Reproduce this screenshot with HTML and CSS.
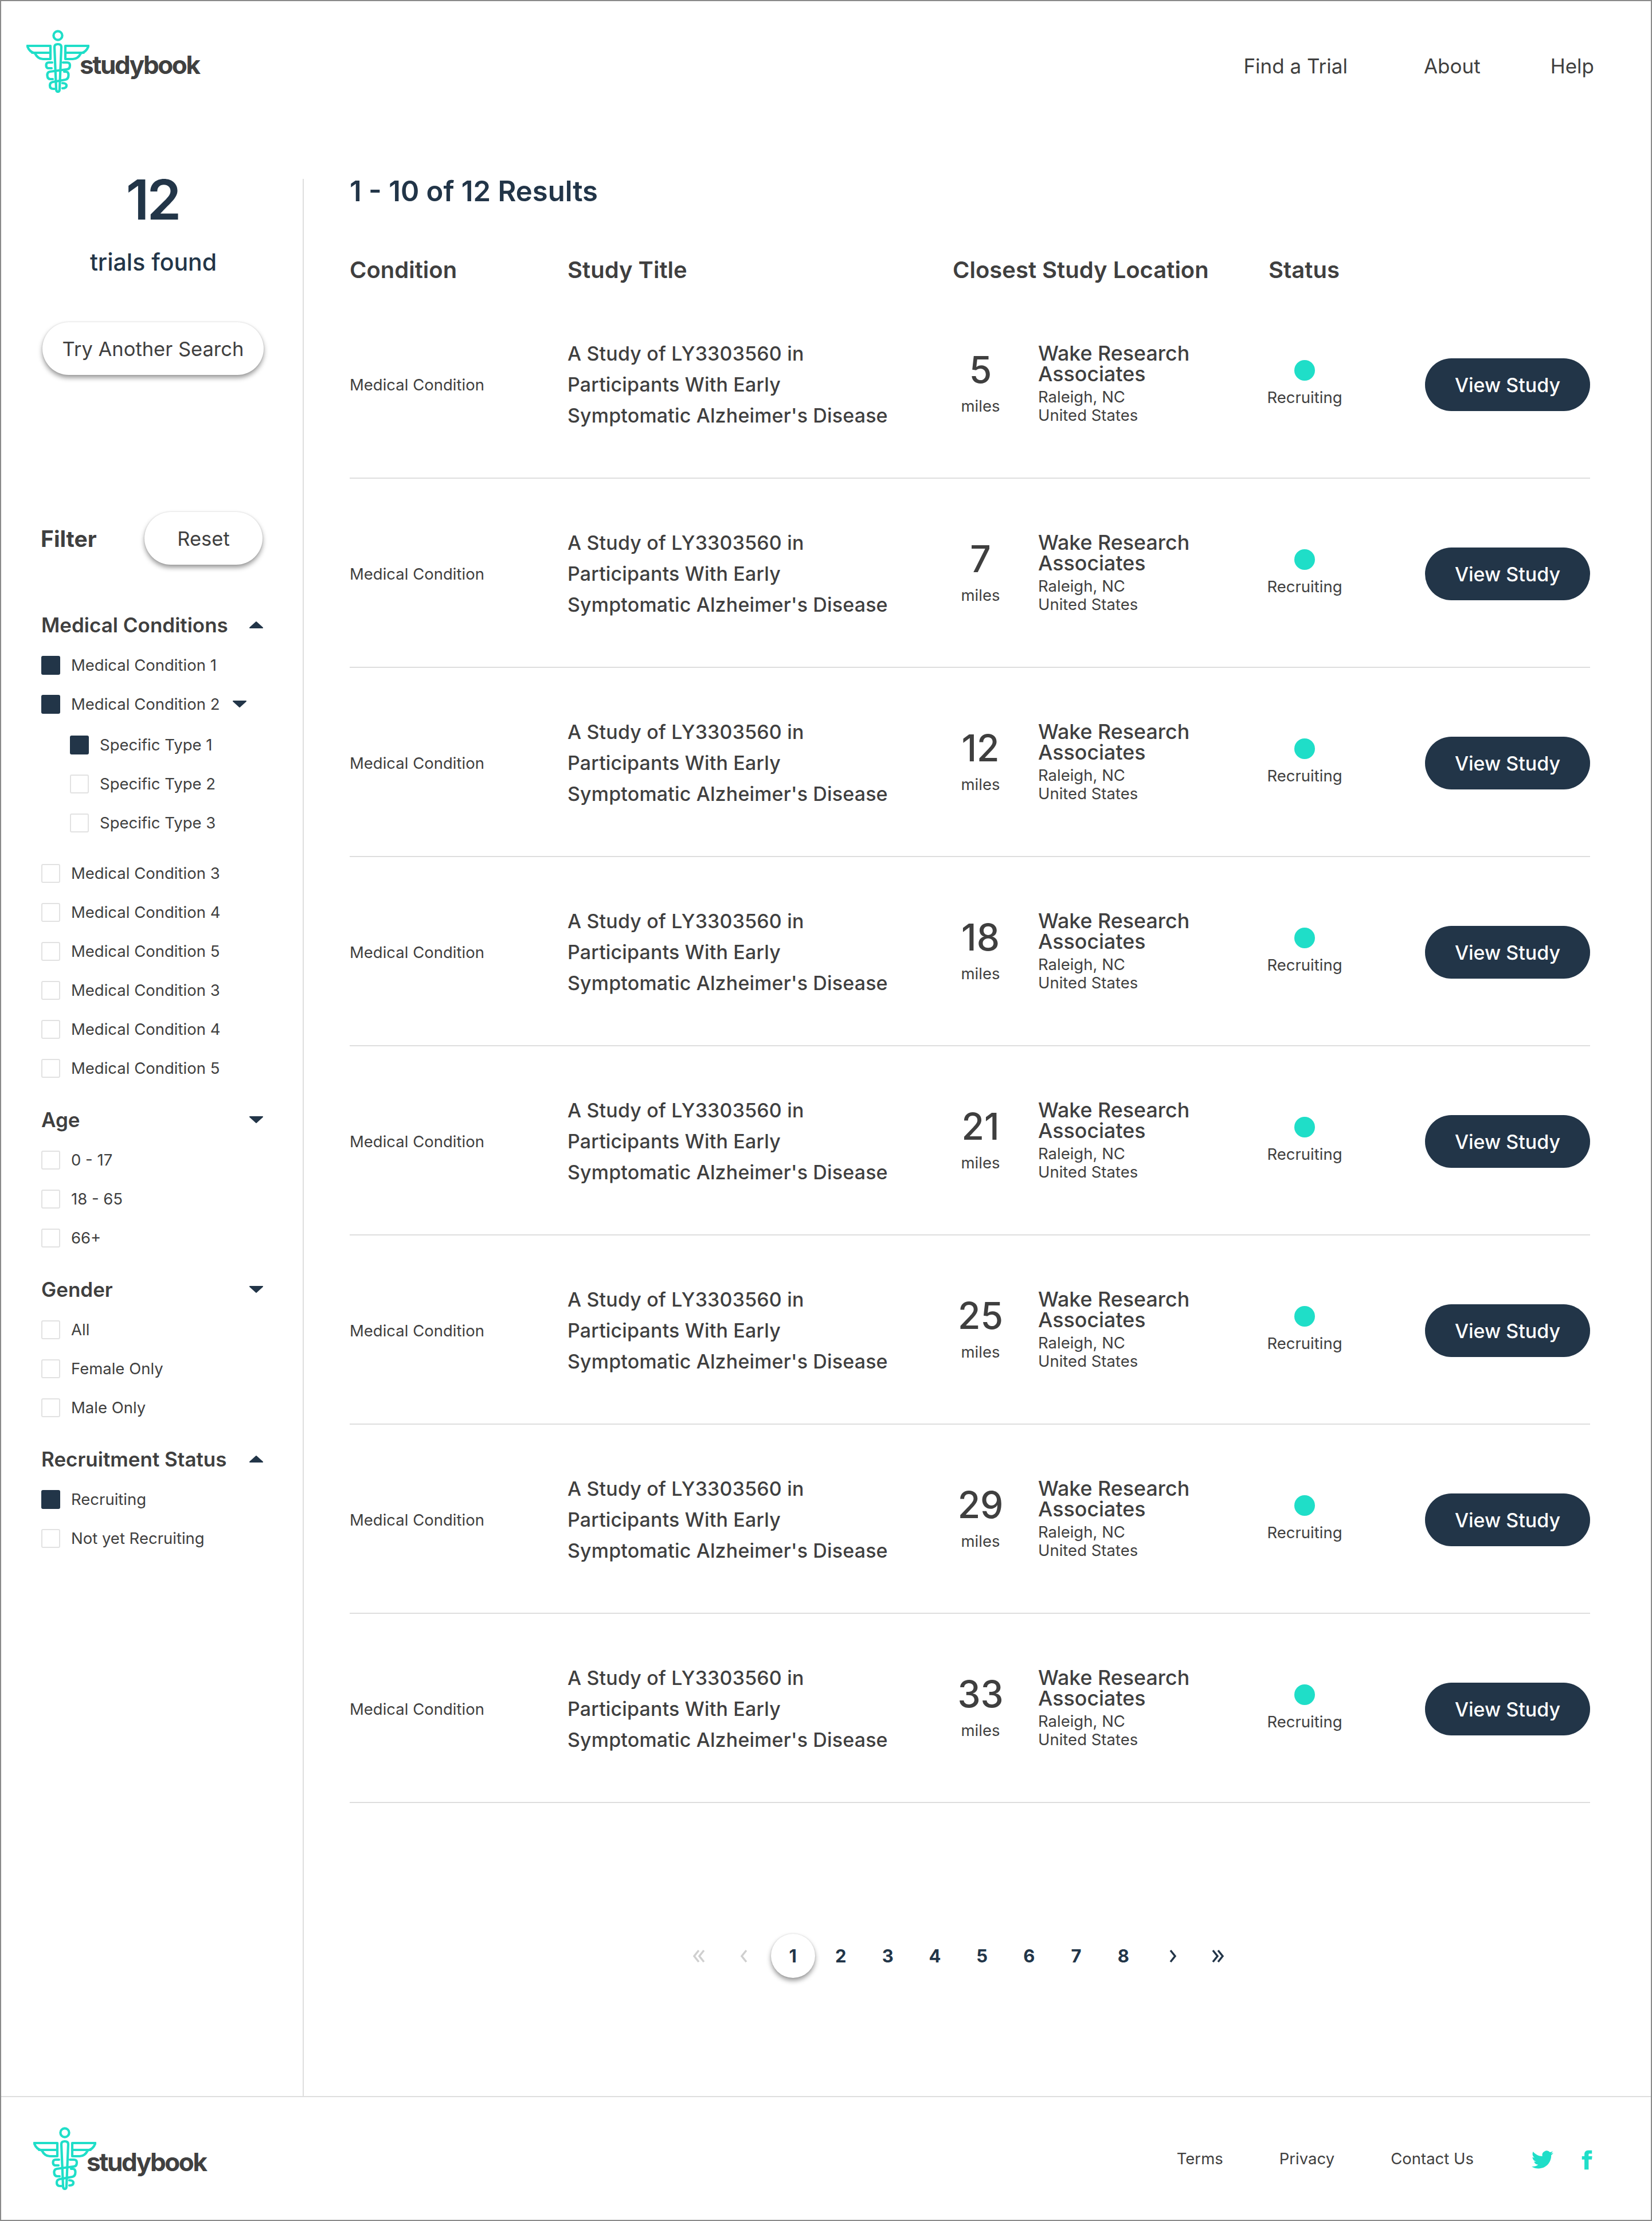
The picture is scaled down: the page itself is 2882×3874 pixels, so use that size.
FILE: index.html
```html
<!DOCTYPE html>
<html lang="en">
<head>
    <meta charset="UTF-8">
    <title>Studybook - Find a Trial</title>
    <link rel="stylesheet" href="styles.css">
</head>
<body>
    <!-- shared icons -->
    <svg class="icon-defs" width="0" height="0">
        <symbol id="caduceus" viewBox="0 0 110 110">
            <g fill="none" stroke="#1fdec8" stroke-width="4.2" stroke-linecap="round" stroke-linejoin="round">
                <circle cx="55" cy="10" r="7.6"/>
                <path d="M49 30Q49 25 55 25Q61 25 61 30L58 103Q58 108 55 108Q52 108 52 103Z"/>
                <path d="M1.500 28H42V51H29Q20 51 15 41Q5 39 1.500 28ZM10 40H42"/>
                <path d="M108.500 28H68V51H81Q90 51 95 41Q105 39 108.500 28ZM100 40H68"/>
                <path d="M45 57H39Q34.500 57 34.500 62Q34.500 67 39 67H44"/>
                <path d="M64 57H71Q76 57 76 62Q76 69 70 69L41 73Q36 74 36.500 80Q37 86 42 86H46"/>
                <path d="M66 73H69Q73.500 73 73.500 79Q73.500 86 68 87L46 91Q41 92 41 97Q41 103 47 103H49"/>
                <path d="M63 93Q70 93 70 97.500Q70 102 63 102"/>
            </g>
        </symbol>
        <symbol id="arrow-up" viewBox="0 0 26 14">
            <path d="M13 2L24 12H2Z" fill="#223548" stroke="#223548" stroke-width="2" stroke-linejoin="round"/>
        </symbol>
        <symbol id="arrow-down" viewBox="0 0 26 14">
            <path d="M13 12L24 2H2Z" fill="#223548" stroke="#223548" stroke-width="2" stroke-linejoin="round"/>
        </symbol>
    </svg>

    <div class="page">
        <header class="site-header">
            <a class="logo">
                <svg class="logo-icon"><use href="#caduceus"/></svg>
                <span class="logo-text">studybook</span>
            </a>
            <nav class="main-nav">
                <a class="nav-find">Find a Trial</a>
                <a class="nav-about">About</a>
                <a>Help</a>
            </nav>
        </header>

        <div class="content">
            <aside class="sidebar">
                <div class="found-count">12</div>
                <div class="found-label">trials found</div>
                <button class="pill-btn search-btn">Try Another Search</button>

                <div class="filter-title">
                    <span>Filter</span>
                    <button class="pill-btn reset-btn">Reset</button>
                </div>

                <section class="filter-group first-group">
                    <h3 class="filter-heading">Medical Conditions <svg class="arrow"><use href="#arrow-up"/></svg></h3>
                    <div class="check-item"><span class="box checked"></span>Medical Condition 1</div>
                    <div class="check-item"><span class="box checked"></span>Medical Condition 2 <svg class="arrow arrow-inline"><use href="#arrow-down"/></svg></div>
                    <div class="sub-list">
                        <div class="check-item"><span class="box checked"></span>Specific Type 1</div>
                        <div class="check-item"><span class="box"></span>Specific Type 2</div>
                        <div class="check-item"><span class="box"></span>Specific Type 3</div>
                    </div>
                    <div class="check-item"><span class="box"></span>Medical Condition 3</div>
                    <div class="check-item"><span class="box"></span>Medical Condition 4</div>
                    <div class="check-item"><span class="box"></span>Medical Condition 5</div>
                    <div class="check-item"><span class="box"></span>Medical Condition 3</div>
                    <div class="check-item"><span class="box"></span>Medical Condition 4</div>
                    <div class="check-item"><span class="box"></span>Medical Condition 5</div>
                </section>

                <section class="filter-group">
                    <h3 class="filter-heading">Age <svg class="arrow"><use href="#arrow-down"/></svg></h3>
                    <div class="check-item"><span class="box"></span>0 - 17</div>
                    <div class="check-item"><span class="box"></span>18 - 65</div>
                    <div class="check-item"><span class="box"></span>66+</div>
                </section>

                <section class="filter-group">
                    <h3 class="filter-heading">Gender <svg class="arrow"><use href="#arrow-down"/></svg></h3>
                    <div class="check-item"><span class="box"></span>All</div>
                    <div class="check-item"><span class="box"></span>Female Only</div>
                    <div class="check-item"><span class="box"></span>Male Only</div>
                </section>

                <section class="filter-group">
                    <h3 class="filter-heading">Recruitment Status <svg class="arrow"><use href="#arrow-up"/></svg></h3>
                    <div class="check-item"><span class="box checked"></span>Recruiting</div>
                    <div class="check-item"><span class="box"></span>Not yet Recruiting</div>
                </section>
            </aside>

            <main class="results">
                <h1 class="results-title">1 - 10 of 12 Results</h1>

                <div class="table-head">
                    <div>Condition</div>
                    <div>Study Title</div>
                    <div class="head-location">Closest Study Location</div>
                    <div class="head-status">Status</div>
                </div>

                <article class="study-row">
                    <div class="condition">Medical Condition</div>
                    <div class="study-title">A Study of LY3303560 in<br>Participants With Early<br>Symptomatic Alzheimer's Disease</div>
                    <div class="distance"><strong>5</strong><span>miles</span></div>
                    <div class="location"><strong>Wake Research<br>Associates</strong><span>Raleigh, NC<br>United States</span></div>
                    <div class="status"><i class="dot"></i><span>Recruiting</span></div>
                    <button class="view-btn">View Study</button>
                </article>
                <article class="study-row">
                    <div class="condition">Medical Condition</div>
                    <div class="study-title">A Study of LY3303560 in<br>Participants With Early<br>Symptomatic Alzheimer's Disease</div>
                    <div class="distance"><strong>7</strong><span>miles</span></div>
                    <div class="location"><strong>Wake Research<br>Associates</strong><span>Raleigh, NC<br>United States</span></div>
                    <div class="status"><i class="dot"></i><span>Recruiting</span></div>
                    <button class="view-btn">View Study</button>
                </article>
                <article class="study-row">
                    <div class="condition">Medical Condition</div>
                    <div class="study-title">A Study of LY3303560 in<br>Participants With Early<br>Symptomatic Alzheimer's Disease</div>
                    <div class="distance"><strong>12</strong><span>miles</span></div>
                    <div class="location"><strong>Wake Research<br>Associates</strong><span>Raleigh, NC<br>United States</span></div>
                    <div class="status"><i class="dot"></i><span>Recruiting</span></div>
                    <button class="view-btn">View Study</button>
                </article>
                <article class="study-row">
                    <div class="condition">Medical Condition</div>
                    <div class="study-title">A Study of LY3303560 in<br>Participants With Early<br>Symptomatic Alzheimer's Disease</div>
                    <div class="distance"><strong>18</strong><span>miles</span></div>
                    <div class="location"><strong>Wake Research<br>Associates</strong><span>Raleigh, NC<br>United States</span></div>
                    <div class="status"><i class="dot"></i><span>Recruiting</span></div>
                    <button class="view-btn">View Study</button>
                </article>
                <article class="study-row">
                    <div class="condition">Medical Condition</div>
                    <div class="study-title">A Study of LY3303560 in<br>Participants With Early<br>Symptomatic Alzheimer's Disease</div>
                    <div class="distance"><strong>21</strong><span>miles</span></div>
                    <div class="location"><strong>Wake Research<br>Associates</strong><span>Raleigh, NC<br>United States</span></div>
                    <div class="status"><i class="dot"></i><span>Recruiting</span></div>
                    <button class="view-btn">View Study</button>
                </article>
                <article class="study-row">
                    <div class="condition">Medical Condition</div>
                    <div class="study-title">A Study of LY3303560 in<br>Participants With Early<br>Symptomatic Alzheimer's Disease</div>
                    <div class="distance"><strong>25</strong><span>miles</span></div>
                    <div class="location"><strong>Wake Research<br>Associates</strong><span>Raleigh, NC<br>United States</span></div>
                    <div class="status"><i class="dot"></i><span>Recruiting</span></div>
                    <button class="view-btn">View Study</button>
                </article>
                <article class="study-row">
                    <div class="condition">Medical Condition</div>
                    <div class="study-title">A Study of LY3303560 in<br>Participants With Early<br>Symptomatic Alzheimer's Disease</div>
                    <div class="distance"><strong>29</strong><span>miles</span></div>
                    <div class="location"><strong>Wake Research<br>Associates</strong><span>Raleigh, NC<br>United States</span></div>
                    <div class="status"><i class="dot"></i><span>Recruiting</span></div>
                    <button class="view-btn">View Study</button>
                </article>
                <article class="study-row">
                    <div class="condition">Medical Condition</div>
                    <div class="study-title">A Study of LY3303560 in<br>Participants With Early<br>Symptomatic Alzheimer's Disease</div>
                    <div class="distance"><strong>33</strong><span>miles</span></div>
                    <div class="location"><strong>Wake Research<br>Associates</strong><span>Raleigh, NC<br>United States</span></div>
                    <div class="status"><i class="dot"></i><span>Recruiting</span></div>
                    <button class="view-btn">View Study</button>
                </article>

                <nav class="pagination">
                    <a class="page-arrow disabled"><svg viewBox="0 0 24 24"><path d="M11 2L3 12L11 22M20 2L12 12L20 22"/></svg></a>
                    <a class="page-arrow disabled"><svg viewBox="0 0 24 24"><path d="M12 2L4 12L12 22"/></svg></a>
                    <a class="page-num current">1</a>
                    <a class="page-num">2</a>
                    <a class="page-num">3</a>
                    <a class="page-num">4</a>
                    <a class="page-num">5</a>
                    <a class="page-num">6</a>
                    <a class="page-num">7</a>
                    <a class="page-num">8</a>
                    <a class="page-arrow"><svg viewBox="0 0 24 24"><path d="M12 2L20 12L12 22"/></svg></a>
                    <a class="page-arrow"><svg viewBox="0 0 24 24"><path d="M4 2L12 12L4 22M13 2L21 12L13 22"/></svg></a>
                </nav>
            </main>
        </div>

        <footer class="site-footer">
            <a class="logo">
                <svg class="logo-icon"><use href="#caduceus"/></svg>
                <span class="logo-text">studybook</span>
            </a>
            <nav class="footer-nav">
                <a>Terms</a>
                <a>Privacy</a>
                <a>Contact Us</a>
            </nav>
            <div class="social">
                <svg class="twitter" viewBox="0 0 24 24"><path d="M23.953 4.57a10 10 0 01-2.825.775 4.958 4.958 0 002.163-2.723c-.951.555-2.005.959-3.127 1.184a4.92 4.92 0 00-8.384 4.482C7.69 8.095 4.067 6.13 1.64 3.162a4.822 4.822 0 00-.666 2.475c0 1.71.87 3.213 2.188 4.096a4.904 4.904 0 01-2.228-.616v.06a4.923 4.923 0 003.946 4.827 4.996 4.996 0 01-2.212.085 4.936 4.936 0 004.604 3.417 9.867 9.867 0 01-6.102 2.105c-.39 0-.779-.023-1.17-.067a13.995 13.995 0 007.557 2.209c9.053 0 13.998-7.496 13.998-13.985 0-.21 0-.42-.015-.63A9.935 9.935 0 0024 4.59z"/></svg>
                <svg class="facebook" viewBox="6 0 13 24"><path d="M18.770 7.460H14.500v-1.900c0-.9.6-1.100 1-1.100h3V.5h-4.330C10.240.5 9.500 3.440 9.500 5.320v2.150h-3v4h3v12h5v-12h3.850l.42-4z"/></svg>
            </div>
        </footer>
    </div>
</body>
</html>
```

FILE: styles.css
```css
* {
    margin: 0;
    padding: 0;
    box-sizing: border-box;
}

body {
    font-family: 'Inter', 'Liberation Sans', sans-serif;
    color: #3f3f3f;
    background: white;
}

button {
    font-family: inherit;
    border: none;
    cursor: pointer;
}

.icon-defs {
    position: absolute;
}

.page {
    width: 2882px;
    height: 3874px;
    border: 2px solid #8a8a8a;
    display: flex;
    flex-direction: column;
}

/* header */
.site-header {
    height: 288px;
    flex: none;
    display: flex;
    align-items: flex-start;
    justify-content: space-between;
    padding: 50px 99px 0 44px;
}

.logo {
    display: flex;
    align-items: flex-start;
}

.logo-icon {
    width: 110px;
    height: 110px;
    flex: none;
}

.logo-text {
    margin: 33px 0 0 -17px;
    font-size: 44px;
    line-height: 56px;
    font-weight: 700;
    letter-spacing: -2.4px;
    color: #404040;
}

.main-nav {
    display: flex;
    margin-top: 40px;
    font-size: 35px;
    line-height: 46px;
}

.nav-find {
    margin-right: 133px;
}

.nav-about {
    margin-right: 122px;
}

/* sidebar + results */
.content {
    flex: 1;
    display: flex;
    min-height: 0;
}

.sidebar {
    width: 528px;
    flex: none;
    margin-top: 22px;
    padding: 0 68px 0 70px;
    border-right: 2px solid #dedede;
}

.found-count {
    text-align: center;
    font-size: 96px;
    line-height: 72px;
    font-weight: 600;
    color: #223548;
    letter-spacing: -4px;
}

.found-label {
    margin-top: 48px;
    padding-left: 3px;
    text-align: center;
    font-size: 41px;
    line-height: 50px;
    font-weight: 500;
    color: #223548;
}

.pill-btn {
    display: block;
    height: 92px;
    border-radius: 46px;
    background: white;
    color: #3f3f3f;
    font-size: 34.500px;
    box-shadow: 0 5px 8px rgba(0, 0, 0, 0.4), 0 0 3px rgba(0, 0, 0, 0.12);
}

.search-btn {
    width: 386px;
    margin: 80px 0 0 2px;
}

.filter-title {
    display: flex;
    align-items: center;
    justify-content: space-between;
    margin: 239px 0 0 -1px;
    font-size: 39px;
    font-weight: 700;
}

.reset-btn {
    width: 206px;
    margin-right: 2px;
    font-weight: 400;
}

.filter-group {
    margin-top: 34px;
}

.first-group {
    margin-top: 83px;
}

.filter-heading {
    display: flex;
    align-items: center;
    justify-content: space-between;
    height: 44px;
    margin-bottom: 14px;
    font-size: 35px;
    line-height: 44px;
    font-weight: 600;
}

.arrow {
    width: 26px;
    height: 14px;
    flex: none;
}

.arrow-inline {
    margin-left: 22px;
}

.check-item {
    display: flex;
    align-items: center;
    height: 68px;
    font-size: 27.500px;
    white-space: nowrap;
}

.box {
    width: 33px;
    height: 33px;
    flex: none;
    margin-right: 19px;
    border: 2px solid #e2e2e2;
    border-radius: 3px;
}

.box.checked {
    background: #223548;
    border-color: #223548;
}

.sub-list {
    margin: 3px 0 20px 50px;
}

.results {
    flex: 1;
    padding: 14px 106px 0 80px;
}

.results-title {
    font-size: 49px;
    line-height: 60px;
    font-weight: 600;
    color: #223548;
}

.table-head,
.study-row {
    display: grid;
    grid-template-columns: 380px 672px 149px 402px 126px 1fr;
}

.table-head {
    margin-top: 82px;
    height: 59px;
    font-size: 40px;
    line-height: 50px;
    font-weight: 600;
}

.head-location {
    grid-column: span 2;
}

.head-status {
    white-space: nowrap;
}

.study-row {
    height: 330px;
    padding-top: 4px;
    align-items: center;
    border-bottom: 2px solid #dedede;
}

.condition {
    font-size: 27.500px;
}

.study-title {
    font-size: 34px;
    line-height: 54px;
    font-weight: 500;
    letter-spacing: 0.15px;
    white-space: nowrap;
}

.distance {
    width: 97px;
    margin-top: -4px;
    display: flex;
    flex-direction: column;
    align-items: center;
    text-align: center;
}

.distance strong {
    font-size: 64px;
    line-height: 64px;
    font-weight: 500;
    margin-bottom: 14px;
}

.distance span {
    font-size: 27.500px;
    line-height: 34px;
}

.location {
    margin-top: -4px;
}

.location strong {
    display: block;
    font-size: 35.800px;
    line-height: 36px;
    font-weight: 500;
    margin-bottom: 6px;
}

.location span {
    display: block;
    font-size: 27.500px;
    line-height: 32px;
}

.status {
    margin-top: -4px;
    display: flex;
    flex-direction: column;
    align-items: center;
    font-size: 27.500px;
    line-height: 34px;
    white-space: nowrap;
}

.dot {
    width: 36px;
    height: 36px;
    border-radius: 50%;
    background: #1fdec8;
    margin-bottom: 12px;
}

.view-btn {
    justify-self: end;
    width: 288px;
    height: 92px;
    border-radius: 46px;
    background: #223548;
    color: white;
    font-size: 34px;
    font-weight: 500;
}

/* pagination */
.pagination {
    display: flex;
    align-items: center;
    margin: 228px 0 0 569px;
    height: 77px;
    color: #223548;
    font-size: 31px;
    font-weight: 700;
}

.page-num,
.page-arrow {
    width: 82.2px;
    flex: none;
    display: flex;
    align-items: center;
    justify-content: center;
}

.page-num.current {
    width: 77px;
    height: 77px;
    margin: 0 4px 0 1.2px;
    border-radius: 50%;
    background: white;
    box-shadow: 0 5px 8px rgba(0, 0, 0, 0.4), 0 0 3px rgba(0, 0, 0, 0.12);
}

.page-arrow svg {
    width: 24px;
    height: 24px;
    fill: none;
    stroke: #223548;
    stroke-width: 3.500;
}

.page-arrow.disabled svg {
    stroke: #cfcfcf;
}

/* footer */
.site-footer {
    height: 216px;
    flex: none;
    display: flex;
    align-items: flex-start;
    padding: 52px 102px 0 56px;
    border-top: 2px solid #dedede;
}

.footer-nav {
    display: flex;
    gap: 98px;
    margin: 36px 0 0 auto;
    font-size: 27.500px;
    line-height: 38px;
}

.social {
    display: flex;
    align-items: center;
    gap: 49px;
    margin: 38px 0 0 101px;
    fill: #1fdec8;
}

.twitter {
    width: 38px;
    height: 38px;
}

.facebook {
    width: 19px;
    height: 35px;
}
```
